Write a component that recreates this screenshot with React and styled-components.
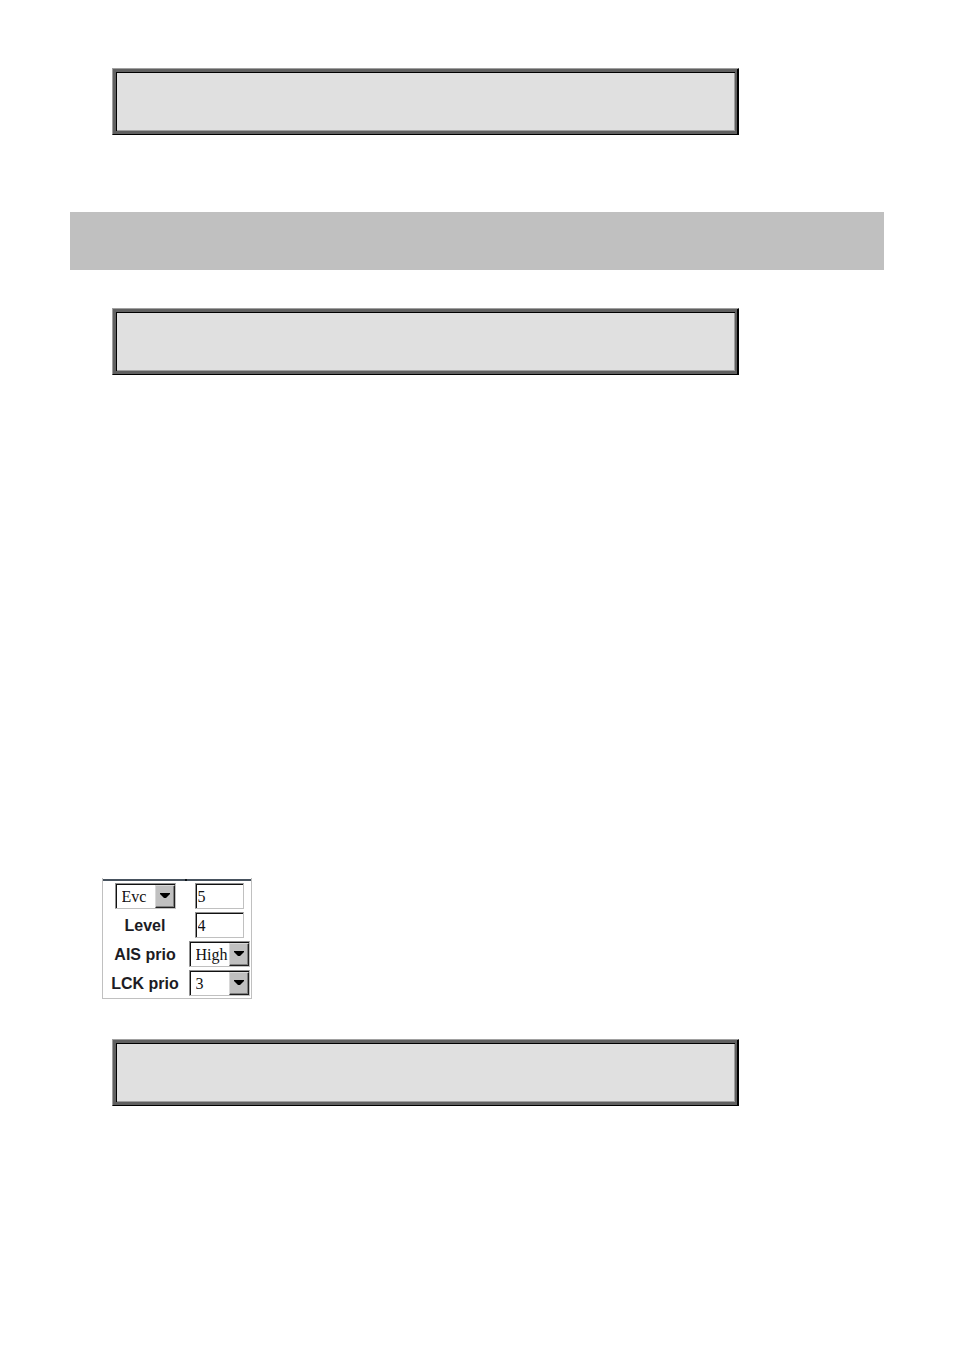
import React from "react";
import styled, { createGlobalStyle } from "styled-components";

const GlobalStyle = createGlobalStyle`
  * {
    box-sizing: border-box;
  }
  body {
    margin: 0;
    background: #fff;
  }
`;

function Dropdown({ id, label, options }) {
  return (
    <SelectWrapper>
      <select id={id} aria-label={label} defaultValue={options[0]}>
        {options.map((option) => (
          <option key={option}>{option}</option>
        ))}
      </select>
      <Arrow aria-hidden="true">
        <svg width="10" height="6" viewBox="0 0 10 6">
          <path d="M0 0h10v1L6 5H4L0 1z" fill="#000" />
        </svg>
      </Arrow>
    </SelectWrapper>
  );
}

function App() {
  return (
    <>
      <GlobalStyle />
      <Page>
        <CommandBox />
        <Band />
        <CommandBox />
        <Panel>
          <TopLine />
          <Cell>
            <Dropdown label="Domain" options={["Evc", "Port"]} />
          </Cell>
          <Cell>
            <TextInput aria-label="Evc" defaultValue="5" />
          </Cell>
          <Cell>
            <Label htmlFor="level">Level</Label>
          </Cell>
          <Cell>
            <TextInput id="level" defaultValue="4" />
          </Cell>
          <Cell>
            <Label htmlFor="ais">AIS prio</Label>
          </Cell>
          <Cell>
            <Dropdown id="ais" options={["High", "Low"]} />
          </Cell>
          <Cell>
            <Label htmlFor="lck">LCK prio</Label>
          </Cell>
          <Cell>
            <Dropdown id="lck" options={["3", "4", "5"]} />
          </Cell>
        </Panel>
        <CommandBox />
      </Page>
    </>
  );
}

const Page = styled.main`
  display: flex;
  flex-direction: column;
  min-height: 100vh;
  padding: 68px 70px;
`;

const CommandBox = styled.div`
  min-height: 67px;
  margin: 0 145px 0 42px;
  background: #e0e0e0;
  border: 1px solid;
  border-color: #a0a0a0 #000 #000 #a0a0a0;
  box-shadow:
    inset -1px 0 0 #000,
    inset 0 0 0 3px #606060,
    inset 4px 4px 0 #000,
    inset -4px -4px 0 #a0a0a0;
`;

const Band = styled.div`
  min-height: 58px;
  margin: 77px 0 38px;
  background: #c0c0c0;
`;

const Panel = styled.form`
  display: grid;
  grid-template-columns: 84px 64px;
  grid-template-rows: 2px;
  grid-auto-rows: 29px;
  align-self: flex-start;
  margin: 503px 0 40px 32px;
  padding: 1px 0;
  border: 1px solid #c0c0c0;
  border-top: 0;
`;

/* heading rule, with the column divider showing through */
const TopLine = styled.div`
  grid-column: 1 / -1;
  background: linear-gradient(
    to right,
    #47525e 82px,
    #101418 82px,
    #101418 84px,
    #47525e 84px
  );
`;

const Cell = styled.div`
  display: flex;
  align-items: center;
  justify-content: center;
`;

const Label = styled.label`
  padding-top: 2px;
  font: bold 16px/20px "Liberation Sans", Arial, sans-serif;
  color: #1c1c24;
  white-space: nowrap;
`;

const TextInput = styled.input`
  width: 49px;
  height: 26px;
  padding: 2px 2px 0;
  border: 1px solid #c0c0c0;
  border-top-color: #909090;
  border-left-color: #909090;
  border-radius: 0;
  outline: 0;
  background: #fff;
  box-shadow: inset 1px 1px 0 #111;
  color: #111;
  font: 16px/20px "Liberation Serif", "Times New Roman", serif;
`;

const SelectWrapper = styled.div`
  position: relative;
  width: 61px;
  height: 26px;
  border: 1px solid #c0c0c0;
  border-top-color: #909090;
  border-left-color: #909090;

  select {
    appearance: none;
    display: block;
    width: 100%;
    height: 100%;
    padding: 2px 19px 0 6px;
    border: 0;
    border-radius: 0;
    outline: 0;
    background: #fff;
    box-shadow: inset 1px 1px 0 #111;
    color: #111;
    font: 16px/20px "Liberation Serif", "Times New Roman", serif;
  }
`;

/* sits on top of the select, clicks go through to it */
const Arrow = styled.span`
  position: absolute;
  top: 1px;
  right: 0;
  bottom: 0;
  display: flex;
  align-items: center;
  justify-content: center;
  width: 20px;
  border: 1px solid;
  border-color: #d8d8d8 #202020 #202020 #d8d8d8;
  background: #c0c0c0;
  box-shadow: inset -1px -1px 0 #808080;
  pointer-events: none;
`;

export default App;
